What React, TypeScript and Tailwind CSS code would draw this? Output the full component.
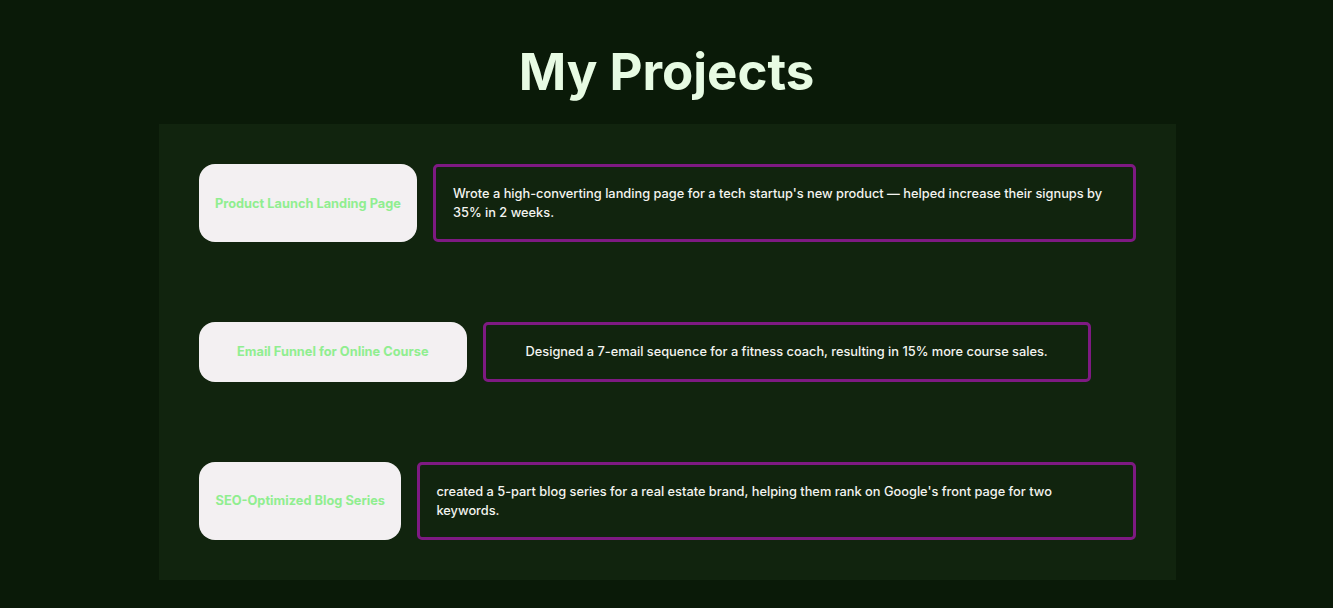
const projects = [
  {
    title: "Product Launch Landing Page",
    body: "Wrote a high-converting landing page for a tech startup's new product — helped increase their signups by 35% in 2 weeks.",
    card: "px-4",
    box: "flex-1 px-[17px] text-left",
  },
  {
    title: "Email Funnel for Online Course",
    body: "Designed a 7-email sequence for a fitness coach, resulting in 15% more course sales.",
    card: "px-[38px]",
    box: "px-10 text-center",
  },
  {
    title: "SEO-Optimized Blog Series",
    body: "created a 5-part blog series for a real estate brand, helping them rank on Google's front page for two keywords.",
    card: "px-[16.5px]",
    box: "flex-1 px-4 text-left",
  },
];

export default function App() {
  return (
    <div
      className="min-h-[608px] bg-[#0a1a08] pb-7"
      style={{ fontFamily: "Inter, 'Noto Sans', sans-serif" }}
    >
      <h1 className="pt-[36px] pb-[16px] text-center text-[51px] font-bold leading-[72px] text-[#e7fbe3]">
        My Projects
      </h1>
      <section className="mx-auto flex w-[1017px] translate-x-px flex-col gap-20 bg-[#11240e] p-10">
        {projects.map((p) => (
          <div key={p.title} className="flex items-stretch gap-4">
            <div
              className={`flex shrink-0 items-center justify-center rounded-2xl bg-[#f3f0f2] text-[12.8px] font-bold text-[#90ee90] ${p.card}`}
            >
              {p.title}
            </div>
            <div
              className={`rounded-[5px] border-[3px] border-[#7e1a82] py-[17px] text-[12.8px] font-medium leading-[1.5] text-[#f4f4f0] ${p.box}`}
            >
              {p.body}
            </div>
          </div>
        ))}
      </section>
    </div>
  );
}
